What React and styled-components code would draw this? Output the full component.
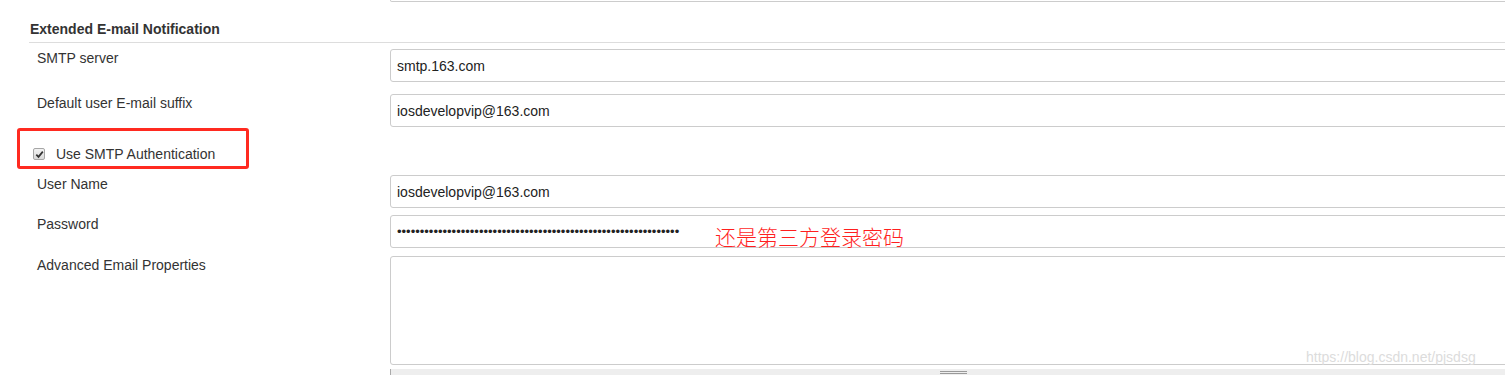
import React from 'react';
import styled, { createGlobalStyle } from 'styled-components';

const Global = createGlobalStyle`
  html, body { margin: 0; padding: 0; background: #fff; overflow: hidden; }
  body {
    font-family: "Liberation Sans", Arial, sans-serif;
    font-size: 14px;
    color: #333;
  }
`;

const Page = styled.div`
  position: relative;
  width: 1516px;
  height: 375px;
  padding-left: 29px;
  box-sizing: border-box;
  overflow: hidden;
`;

const Row = styled.div`
  display: grid;
  grid-template-columns: 361px 1126px;
  padding: ${p => p.$pad || '6px 0'};
`;

const StubRow = styled.div`
  display: grid;
  grid-template-columns: 361px 1126px;
  height: 2px;
`;

const FieldStub = styled.div`
  grid-column: 2;
  height: 2px;
  box-sizing: border-box;
  border: 1px solid #ccc;
  border-top: none;
  border-radius: 0 0 3px 3px;
`;

const SectionHeader = styled.div`
  padding: 19px 0 4px 1px;
  line-height: 17px;
  font-size: 14px;
  font-weight: bold;
  color: #333;
  border-bottom: 1px solid #ddd;
`;

const Label = styled.div`
  padding: 1px 0 0 8px;
  line-height: 17px;
  font-size: 14px;
  color: #333;
`;

const Field = styled.div`
  position: relative;
`;

const TextInput = styled.input`
  display: block;
  width: 100%;
  height: 33px;
  box-sizing: border-box;
  border: 1px solid #ccc;
  border-radius: 3px;
  padding: 0 6px;
  font-family: "Liberation Sans", Arial, sans-serif;
  font-size: ${p => (p.type === 'password' ? '13px' : '14px')};
  color: #222;
  background: #fff;
  outline: none;
`;

const TextArea = styled.textarea`
  display: block;
  width: 100%;
  height: 109px;
  box-sizing: border-box;
  border: 1px solid #ccc;
  border-radius: 3px;
  padding: 6px;
  font-family: "Liberation Sans", Arial, sans-serif;
  font-size: 14px;
  resize: none;
  outline: none;
`;

const Handle = styled.div`
  margin-top: 4px;
  height: 7px;
  box-sizing: border-box;
  background: #eee;
  border-left: 1px solid #aaa;
  border-bottom: 1px solid #999;
  padding-top: 2px;
`;

const Grip = styled.div`
  width: 27px;
  height: 3px;
  margin: 0 auto;
  box-sizing: border-box;
  border-top: 1px solid #999;
  border-bottom: 1px solid #999;
`;

const CheckRow = styled.label`
  display: flex;
  align-items: center;
  gap: 11px;
  padding: 13px 0 8px 4px;
  line-height: 17px;
  font-size: 14px;
  color: #333;
`;

const CheckBox = styled.span`
  display: inline-flex;
  align-items: center;
  justify-content: center;
  width: 12px;
  height: 12px;
  margin-top: -1px;
  box-sizing: border-box;
  border: 1px solid #a6a6a6;
  border-radius: 2px;
  background: linear-gradient(#f2f2f2, #d9d9d9);
`;

const Annotation = styled.span`
  position: absolute;
  left: 325px;
  top: 8px;
  line-height: 26px;
  font-family: "Noto Sans CJK SC", "Noto Sans", sans-serif;
  font-size: 21px;
  font-weight: 300;
  color: #ff1f1f;
  white-space: nowrap;
`;

const Highlight = styled.div`
  position: absolute;
  left: 17px;
  top: 128px;
  width: 232px;
  height: 41px;
  box-sizing: border-box;
  border: 3px solid #ff2a20;
  border-radius: 3px;
  pointer-events: none;
`;

const Watermark = styled.div`
  position: absolute;
  left: 1306px;
  top: 349px;
  line-height: 16px;
  font-size: 14px;
  color: #dcdcdc;
  white-space: nowrap;
  pointer-events: none;
`;

const FieldRow = ({ label, pad, children }) => (
  <Row $pad={pad}>
    <Label>{label}</Label>
    <Field>{children}</Field>
  </Row>
);

export default function App() {
  return (
    <>
      <Global />
      <Page>
        <StubRow>
          <FieldStub />
        </StubRow>
        <SectionHeader>Extended E-mail Notification</SectionHeader>
        <FieldRow label="SMTP server">
          <TextInput defaultValue="smtp.163.com" />
        </FieldRow>
        <FieldRow label="Default user E-mail suffix">
          <TextInput defaultValue="iosdevelopvip@163.com" />
        </FieldRow>
        <CheckRow>
          <CheckBox>
            <svg width="9" height="9" viewBox="0 0 9 9">
              <path d="M1.3 4.6 L3.5 6.9 L7.8 1.6" fill="none" stroke="#333" strokeWidth="1.7" />
            </svg>
          </CheckBox>
          Use SMTP Authentication
        </CheckRow>
        <FieldRow label="User Name" pad="4px 0 3px">
          <TextInput defaultValue="iosdevelopvip@163.com" />
        </FieldRow>
        <FieldRow label="Password" pad="4px 0 3px">
          <TextInput type="password" defaultValue={'x'.repeat(62)} />
          <Annotation>还是第三方登录密码</Annotation>
        </FieldRow>
        <FieldRow label="Advanced Email Properties" pad="5px 0 0">
          <TextArea />
          <Handle>
            <Grip />
          </Handle>
        </FieldRow>
        <Highlight />
        <Watermark>https://blog.csdn.net/pjsdsg</Watermark>
      </Page>
    </>
  );
}
